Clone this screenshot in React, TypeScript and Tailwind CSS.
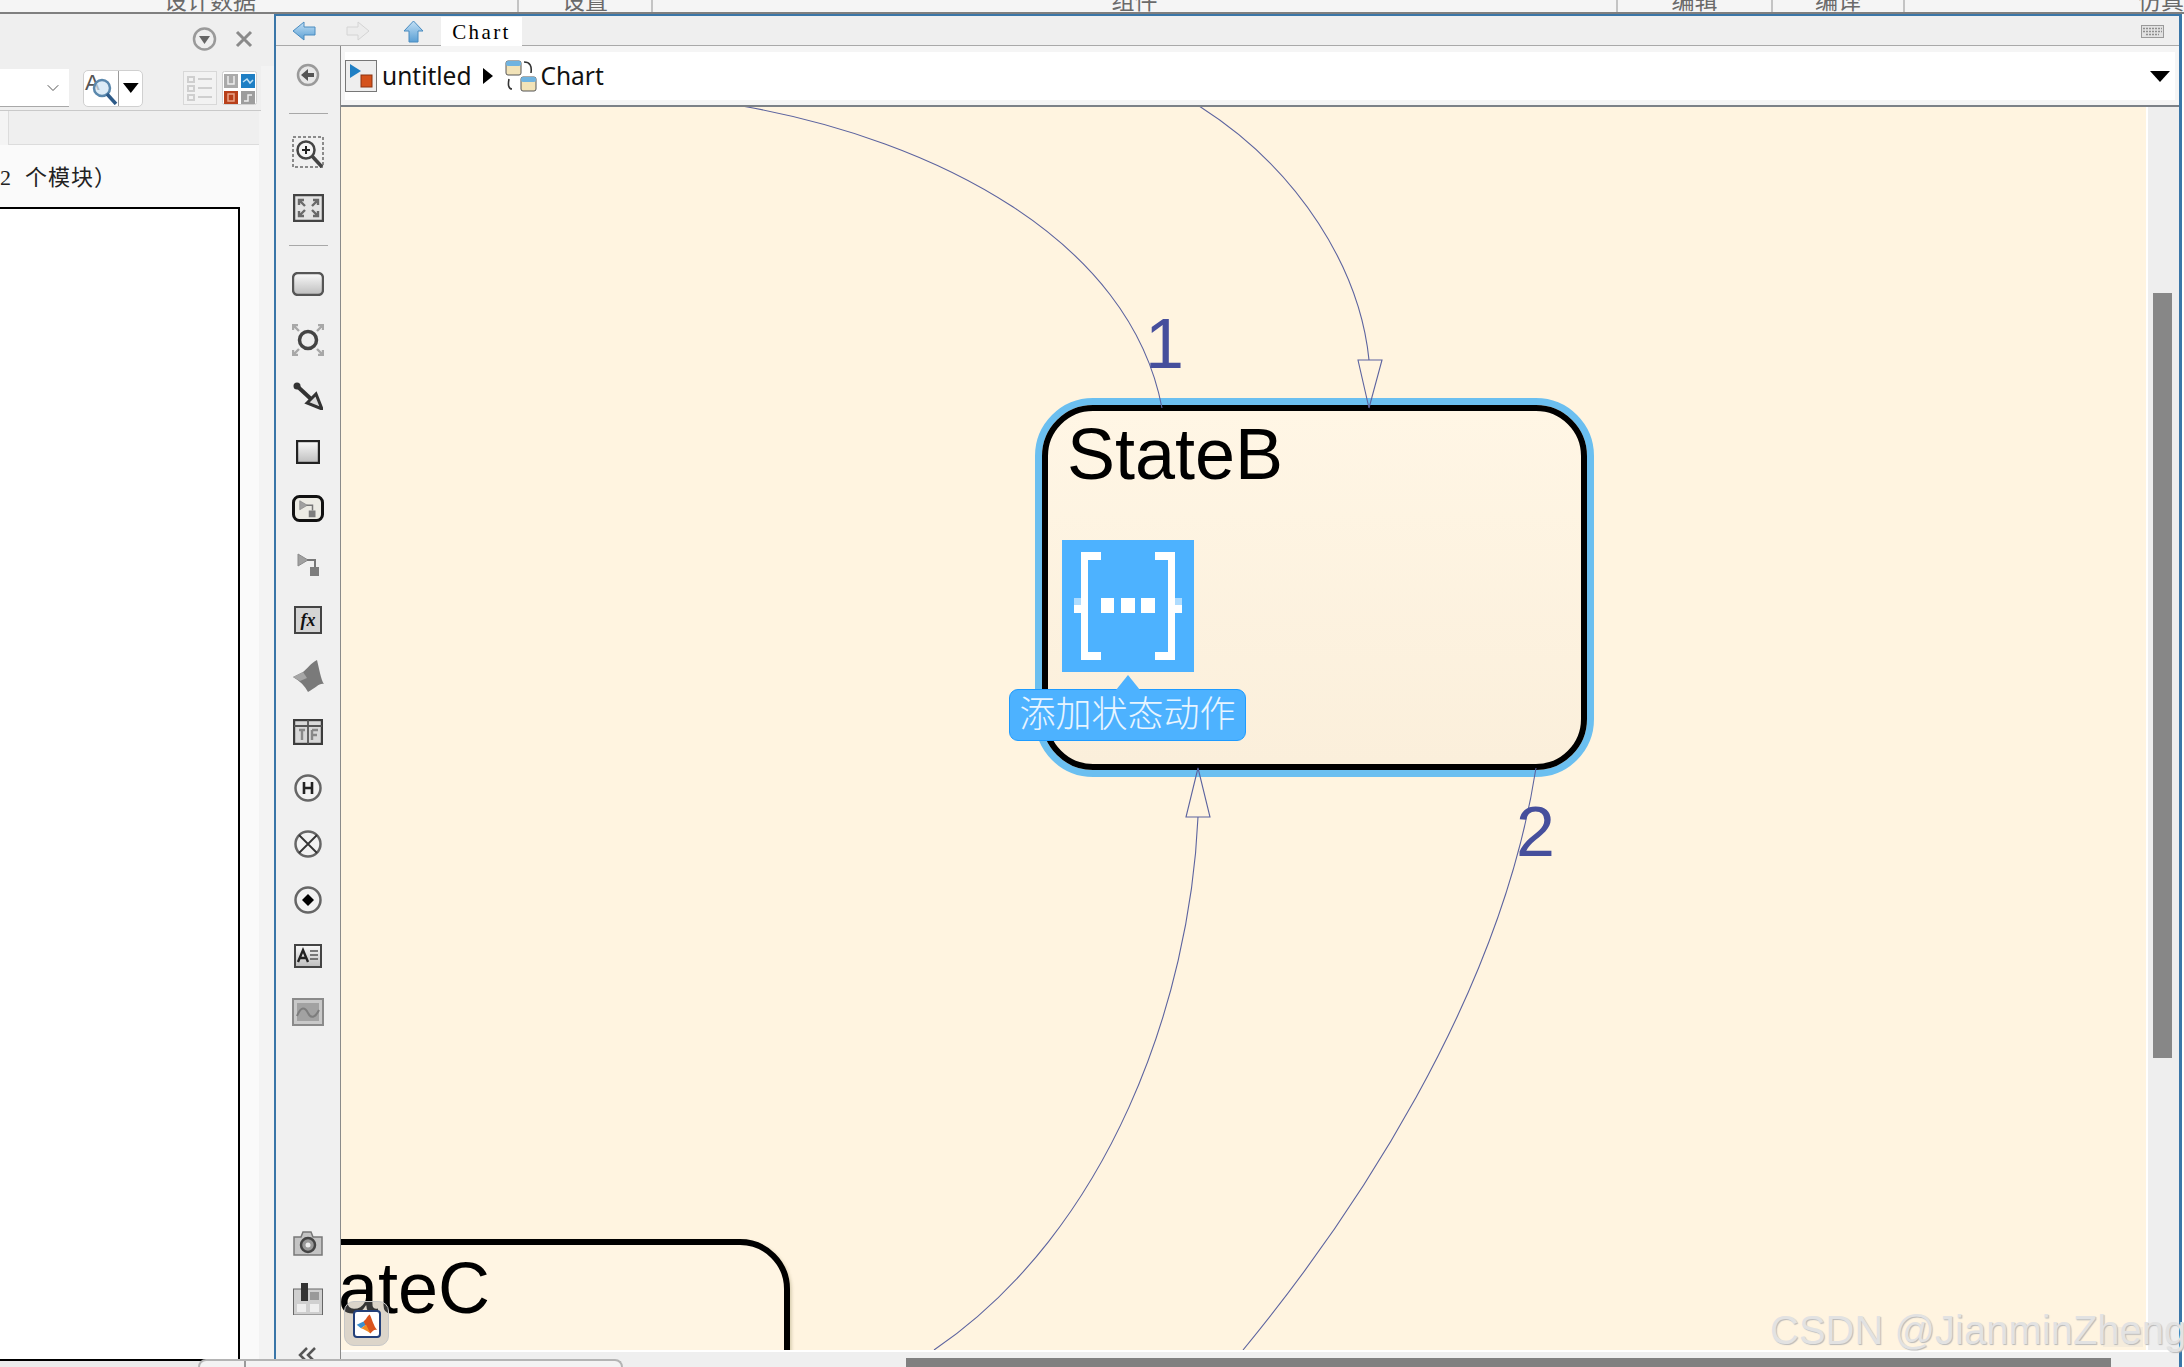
import type { ReactNode } from "react";
import { ChevronDown } from "lucide-react";

const tabs = [
  { label: "设计数据", cls: "w-[519px] justify-end pr-[261px]" },
  { label: "设置", cls: "w-[134px] justify-center" },
  { label: "组件", cls: "w-[965px] justify-center" },
  { label: "编辑", cls: "w-[155px] justify-center" },
  { label: "编译", cls: "w-[132px] justify-center" },
  { label: "仿真", cls: "flex-1 justify-end pr-[0px]" },
];

const Slot = ({ children }: { children: ReactNode }) => (
  <div className="h-14 w-full shrink-0 flex items-center justify-center">{children}</div>
);

const Ico = ({ w, h, children }: { w: number; h: number; children: ReactNode }) => (
  <svg width={w} height={h} viewBox={`0 0 ${w} ${h}`}>
    {children}
  </svg>
);

const Corners = ({ w, h, color = "#8d8d8d" }: { w: number; h: number; color?: string }) => (
  <g stroke={color} strokeWidth="2.4" fill="none">
    <path d={`M1 1 L7 7 M1 6 V1 H6`} />
    <path d={`M${w - 1} 1 L${w - 7} 7 M${w - 1} 6 V1 H${w - 6}`} />
    <path d={`M1 ${h - 1} L7 ${h - 7} M1 ${h - 6} V${h - 1} H6`} />
    <path d={`M${w - 1} ${h - 1} L${w - 7} ${h - 7} M${w - 1} ${h - 6} V${h - 1} H${w - 6}`} />
  </g>
);

const MiniBlock = ({ x, y, s = 1 }: { x: number; y: number; s?: number }) => (
  <g transform={`translate(${x} ${y}) scale(${s})`}>
    <path d="M1 1 L11 7 L1 13 Z" fill="#a0a0a0" stroke="#8a8a8a" />
    <path d="M10 7 H18 V14" stroke="#777" strokeWidth="2" fill="none" />
    <rect x="13" y="14" width="9" height="9" fill="#7d7d7d" />
  </g>
);

const MatlabMark = ({ size }: { size: number }) => (
  <svg width={size} height={size} viewBox="0 0 28 28">
    <path d="M2 15 L10 11 L13 15 L7 19 Z" fill="#3a8fd0" />
    <path d="M10 11 C13 9 15 4 17 3 C19 5 22 18 26 21 C22 20 20 23 18 25 C15 21 13 17 10 11 Z" fill="#d9541e" />
    <path d="M7 19 L13 15 L18 25 C14 22 10 20 7 19 Z" fill="#f08a24" />
  </svg>
);

const App = () => {
  return (
    <div className="w-[2184px] h-[1367px] relative overflow-hidden flex flex-col bg-[#f0f0f0] font-['Liberation_Sans','Noto_Sans_CJK_SC',sans-serif]">
      <svg className="absolute w-0 h-0">
        <defs>
          <linearGradient id="btn" x1="0" y1="0" x2="0" y2="1">
            <stop offset="0" stopColor="#fafafa" />
            <stop offset="1" stopColor="#bdbdbd" />
          </linearGradient>
          <linearGradient id="blueArrow" x1="0" y1="0" x2="0" y2="1">
            <stop offset="0" stopColor="#c3e0f5" />
            <stop offset="1" stopColor="#5a9fd4" />
          </linearGradient>
        </defs>
      </svg>

      {/* clipped ribbon tabs */}
      <div className="h-[14px] shrink-0 flex bg-[#f5f5f5] border-b-2 border-[#7f7f7f] overflow-hidden">
        {tabs.map((t, i) => (
          <div
            key={i}
            className={`${t.cls} h-full flex items-end border-r-2 border-[#c4c4c4] last:border-r-0 text-[23px] leading-none text-[#6a6a6a]`}
          >
            <span className="relative top-[1px] whitespace-nowrap">{t.label}</span>
          </div>
        ))}
      </div>

      <div className="flex-1 flex min-h-0">
        {/* left panel */}
        <div className="w-[274px] shrink-0 flex flex-col bg-[#f3f3f3]">
          <div className="h-[52px] shrink-0 bg-[#efefef] flex items-center justify-end gap-[17px] pr-[20px] pb-[3px]">
            <svg width="25" height="24" viewBox="0 0 25 24">
              <circle cx="12.5" cy="12" r="10.5" fill="none" stroke="#9a9a9a" strokeWidth="2.5" />
              <path d="M7 9 H18 L12.5 17 Z" fill="#666" />
            </svg>
            <svg width="20" height="20" viewBox="0 0 20 20">
              <path d="M3 3 L17 17 M17 3 L3 17" stroke="#8a8a8a" strokeWidth="3" />
            </svg>
          </div>
          <div className="h-[45px] shrink-0 w-[261px] bg-[#efefef] border-b border-[#c9c9c9] flex items-center">
            <div className="w-[69px] h-[38px] bg-white border-b border-[#a8a8a8] flex items-center justify-end pr-[6px]">
              <ChevronDown size={20} strokeWidth={1.2} className="text-[#555]" />
            </div>
            <div className="ml-[14px] w-[60px] h-[37px] bg-white border border-[#d0d0d0] rounded-[5px] flex items-center">
              <div className="w-[36px] h-full border-r border-[#9a9a9a] flex items-center justify-center">
                <svg width="34" height="34" viewBox="0 0 34 34">
                  <text x="1" y="19" fontSize="22" fill="#555" fontFamily="Liberation Sans">A</text>
                  <circle cx="18" cy="17" r="8" fill="#cfe4f3" fillOpacity="0.7" stroke="#5a88ad" strokeWidth="2.5" />
                  <path d="M23 23 L32 33" stroke="#2d5a88" strokeWidth="3.5" />
                </svg>
              </div>
              <svg width="22" height="12" viewBox="0 0 22 12" className="ml-[1px]">
                <path d="M3 1 H19 L11 11 Z" fill="#000" />
              </svg>
            </div>
            <svg width="34" height="34" viewBox="0 0 34 34" className="ml-[40px]">
              <rect x="0.5" y="0.5" width="33" height="33" fill="#f2f2f2" stroke="#d8d8d8" />
              <g fill="none" stroke="#cfcfcf" strokeWidth="2">
                <rect x="5" y="6" width="6" height="5" />
                <rect x="5" y="15" width="6" height="5" />
                <rect x="5" y="24" width="6" height="5" />
                <path d="M15 8 H29 M15 17 H29 M15 26 H29" />
              </g>
            </svg>
            <svg width="35" height="34" viewBox="0 0 35 34" className="ml-[5px]">
              <rect x="0.5" y="0.5" width="34" height="33" rx="2" fill="#fff" stroke="#d0d0d0" />
              <rect x="2" y="3" width="14" height="14" fill="#aaa" />
              <path d="M6 5 V13 H12 V5" stroke="#eee" strokeWidth="1.5" fill="none" />
              <rect x="19" y="3" width="14" height="14" fill="#1f7fc4" />
              <path d="M21 11 L25 8 L28 12 L31 9" stroke="#bfe0f5" strokeWidth="1.5" fill="none" />
              <rect x="2" y="20" width="14" height="13" fill="#b8401a" />
              <rect x="6" y="23" width="6" height="7" fill="none" stroke="#e9a489" strokeWidth="1.5" />
              <rect x="19" y="20" width="14" height="13" fill="#9d9d9d" />
              <path d="M22 30 H26 V24 H30" stroke="#eee" strokeWidth="1.5" fill="none" />
            </svg>
          </div>
          <div className="h-[34px] shrink-0 w-[259px] flex">
            <div className="w-[9px] border-r border-[#dcdcdc] bg-[#f4f4f4]" />
            <div className="flex-1 bg-[#efefef] border-b border-[#dcdcdc]" />
          </div>
          <div className="flex-1 w-[259px] bg-[#fafafa] flex flex-col">
            <div className="h-[62px] shrink-0 pt-[4px] flex items-center text-[22px] tracking-[1px] leading-none text-[#222] whitespace-pre font-['Liberation_Serif','Noto_Sans_CJK_SC',serif]">
              2  个模块）
            </div>
            <div className="w-[240px] flex-1 bg-white border-t-2 border-r-2 border-b-2 border-black mb-[6px]" />
          </div>
        </div>

        {/* chart window */}
        <div className="w-[1908px] shrink-0 flex flex-col border-l-2 border-t-2 border-r-[3px] border-[#3a76a8]">
          <div className="h-[30px] shrink-0 bg-[#efefef] border-b border-[#a9a9a9] flex items-center pt-[1px]">
            <svg width="24" height="20" viewBox="0 0 24 20" className="ml-[16px]">
              <path d="M1 10 L12 1 V6 H23 V14 H12 V19 Z" fill="url(#blueArrow)" stroke="#4a8cc0" />
            </svg>
            <svg width="24" height="20" viewBox="0 0 24 20" className="ml-[30px]">
              <path d="M23 10 L12 1 V6 H1 V14 H12 V19 Z" fill="#ececec" stroke="#d4d4d4" />
            </svg>
            <svg width="21" height="23" viewBox="0 0 21 23" className="ml-[33px]">
              <path d="M10.5 1 L20 11 H15 V22 H6 V11 H1 Z" fill="url(#blueArrow)" stroke="#4a8cc0" />
            </svg>
            <div className="ml-[17px] w-[81px] h-[29px] self-start bg-white text-center text-[21px] tracking-[2.4px] leading-[30px] text-black font-['Liberation_Serif',serif]">
              Chart
            </div>
            <svg width="23" height="13" viewBox="0 0 23 13" className="ml-auto mr-[15px]">
              <rect x="0.5" y="0.5" width="22" height="12" fill="#e2e2e2" stroke="#9a9a9a" />
              <path d="M2 3.5 H21 M2 6.5 H21 M5 9.5 H18" stroke="#8f8f8f" strokeWidth="1.5" strokeDasharray="2 1" />
            </svg>
          </div>

          <div className="flex-1 flex min-h-0">
            {/* tool strip */}
            <div className="w-[65px] shrink-0 border-r border-[#8a8a8a] bg-[#f0f0f0] pt-[1px] flex flex-col items-center overflow-hidden">
              <Slot>
                <svg width="24" height="24" viewBox="0 0 24 24">
                  <circle cx="12" cy="12" r="10" fill="#e8e8e8" stroke="#9a9a9a" strokeWidth="2.5" />
                  <path d="M5 12 L12 6 V10 H18 V14 H12 V18 Z" fill="#555" />
                </svg>
              </Slot>
              <div className="mt-[10px] h-[1px] w-[39px] shrink-0 bg-[#a8a8a8]" />
              <div className="mt-[10px] w-full shrink-0">
                <Slot>
                  <Ico w={32} h={32}>
                    <rect x="1" y="1" width="30" height="30" fill="none" stroke="#8a8a8a" strokeWidth="2" strokeDasharray="3 2" />
                    <circle cx="14" cy="14" r="8.5" fill="#f5f5f5" stroke="#444" strokeWidth="2.5" />
                    <path d="M10 14 H18 M14 10 V18" stroke="#222" strokeWidth="2" />
                    <path d="M20 20 L30 31" stroke="#444" strokeWidth="3.5" />
                  </Ico>
                </Slot>
              </div>
              <Slot>
                <Ico w={31} h={28}>
                  <rect x="1" y="1" width="29" height="26" fill="#e4e4e4" stroke="#444" strokeWidth="2.5" />
                  <g transform="translate(5 5)">
                    <Corners w={21} h={18} color="#6a6a6a" />
                  </g>
                </Ico>
              </Slot>
              <div className="mt-[9px] h-[1px] w-[39px] shrink-0 bg-[#a8a8a8]" />
              <div className="mt-[10px] w-full shrink-0">
                <Slot>
                  <Ico w={32} h={24}>
                    <rect x="1" y="1" width="30" height="22" rx="5" fill="url(#btn)" stroke="#555" strokeWidth="2.4" />
                  </Ico>
                </Slot>
              </div>
              <Slot>
                <Ico w={32} h={32}>
                  <Corners w={32} h={32} color="#a8a8a8" />
                  <circle cx="16" cy="16" r="8.5" fill="#eee" stroke="#444" strokeWidth="3.5" />
                </Ico>
              </Slot>
              <Slot>
                <Ico w={30} h={28}>
                  <circle cx="4" cy="4" r="3.5" fill="#333" />
                  <path d="M4 4 L18 17" stroke="#333" strokeWidth="4" />
                  <path d="M14 21 L23 12 L29 27 Z" fill="#ddd" stroke="#333" strokeWidth="3" />
                </Ico>
              </Slot>
              <Slot>
                <Ico w={24} h={24}>
                  <rect x="1" y="1" width="22" height="22" fill="url(#btn)" stroke="#222" strokeWidth="2.4" />
                </Ico>
              </Slot>
              <Slot>
                <Ico w={32} h={27}>
                  <rect x="1.5" y="1.5" width="29" height="24" rx="6" fill="#ecebe4" stroke="#111" strokeWidth="3" />
                  <MiniBlock x={7} y={5} s={0.75} />
                </Ico>
              </Slot>
              <Slot>
                <Ico w={23} h={25}>
                  <MiniBlock x={0} y={1} />
                </Ico>
              </Slot>
              <Slot>
                <div className="w-[28px] h-[28px] bg-[#d4d4d4] border-2 border-[#444] flex items-center justify-center text-[18px] leading-none italic font-bold text-[#111] font-['Liberation_Serif',serif]">
                  fx
                </div>
              </Slot>
              <Slot>
                <Ico w={32} h={32}>
                  <path d="M1 17 L11 12 C15 9 19 3 25 0 C27 8 29 20 32 24 C27 23 24 28 16 32 C13 26 8 21 1 17 Z" fill="#7a7a7a" />
                  <path d="M1 17 L11 12 L15 18 L8 21 Z" fill="#a5a5a5" />
                </Ico>
              </Slot>
              <Slot>
                <Ico w={30} h={26}>
                  <rect x="1" y="1" width="28" height="24" fill="#d8d8d8" stroke="#3c3c3c" strokeWidth="2.4" />
                  <path d="M1 7 H29 M15 1 V25" stroke="#555" strokeWidth="1.8" />
                  <path d="M6 11 H12 M9 11 V21 M19 11 V21 M19 11 H25 M19 16 H24" stroke="#888" strokeWidth="2.4" fill="none" />
                </Ico>
              </Slot>
              <Slot>
                <Ico w={28} h={28}>
                  <circle cx="14" cy="14" r="12.5" fill="#f2f2f2" stroke="#666" strokeWidth="2.5" />
                  <path d="M10 8 V20 M18 8 V20 M10 14 H18" stroke="#222" strokeWidth="2.6" />
                </Ico>
              </Slot>
              <Slot>
                <Ico w={28} h={28}>
                  <circle cx="14" cy="14" r="12.5" fill="#f2f2f2" stroke="#666" strokeWidth="2.5" />
                  <path d="M5 5 L23 23 M23 5 L5 23" stroke="#333" strokeWidth="1.8" />
                </Ico>
              </Slot>
              <Slot>
                <Ico w={28} h={28}>
                  <circle cx="14" cy="14" r="12.5" fill="#f2f2f2" stroke="#666" strokeWidth="2.5" />
                  <path d="M14 8 L20 14 L14 20 L8 14 Z" fill="#000" />
                </Ico>
              </Slot>
              <Slot>
                <Ico w={28} h={24}>
                  <rect x="1" y="1" width="26" height="22" fill="url(#btn)" stroke="#444" strokeWidth="2" />
                  <path d="M4 18 L9 6 L14 18 M6 14 H12" stroke="#222" strokeWidth="2.4" fill="none" />
                  <path d="M16 7 H24 M16 11 H24 M16 15 H24" stroke="#555" strokeWidth="1.6" />
                </Ico>
              </Slot>
              <Slot>
                <Ico w={32} h={28}>
                  <rect x="1" y="1" width="30" height="26" fill="#c9c9c9" stroke="#8a8a8a" strokeWidth="2" />
                  <rect x="5" y="5" width="22" height="18" fill="#a2a2a2" />
                  <path d="M5 18 C9 8 13 9 16 15 C19 21 23 20 27 12" stroke="#7d7d7d" strokeWidth="2" fill="none" />
                </Ico>
              </Slot>
              <div className="mt-[175px] w-full shrink-0">
                <Slot>
                  <Ico w={30} h={25}>
                    <path d="M1 6 H8 L10 1 H18 L20 6 H29 V24 H1 Z" fill="#c4c4c4" stroke="#777" strokeWidth="1.5" />
                    <circle cx="15" cy="14" r="7" fill="#999" stroke="#444" strokeWidth="2.5" />
                    <circle cx="15" cy="14" r="2.5" fill="#eee" />
                  </Ico>
                </Slot>
              </div>
              <Slot>
                <Ico w={30} h={32}>
                  <rect x="0.5" y="6" width="29" height="26" fill="#cfcfcf" stroke="#666" />
                  <rect x="8" y="0" width="7" height="18" fill="#333" />
                  <rect x="4" y="21" width="9" height="8" fill="#eee" />
                  <rect x="17" y="21" width="9" height="8" fill="#eee" />
                  <rect x="17" y="9" width="9" height="8" fill="#999" />
                </Ico>
              </Slot>
              <Slot>
                <Ico w={20} h={16}>
                  <path d="M9 1 L2 8 L9 15 M17 1 L10 8 L17 15" stroke="#555" strokeWidth="2.5" fill="none" />
                </Ico>
              </Slot>
            </div>

            <div className="flex-1 flex flex-col min-w-0 bg-[#f0f0f0]">
              {/* breadcrumb */}
              <div className="h-[61px] shrink-0 px-[4px] pt-[6px] pb-[5px] bg-[#f5f5f5] border-b-2 border-[#7c8187]">
                <div className="h-[48px] bg-white flex items-center text-[24.5px] leading-none text-[#111] font-['Noto_Sans',sans-serif]">
                  <svg width="32" height="32" viewBox="0 0 32 32">
                    <rect x="0.5" y="0.5" width="31" height="31" fill="#eee" stroke="#777" />
                    <path d="M5 4 L16 11 L5 18 Z" fill="#1f7fc4" />
                    <rect x="16" y="15" width="11" height="12" fill="#d4521c" stroke="#8c3310" />
                  </svg>
                  <span className="ml-[5px]">untitled</span>
                  <svg width="10" height="16" viewBox="0 0 10 16" className="ml-[11px]">
                    <path d="M0 0 L10 8 L0 16 Z" fill="#000" />
                  </svg>
                  <svg width="32" height="32" viewBox="0 0 32 32" className="ml-[12px]">
                    <rect x="1" y="1" width="15" height="14" rx="2" fill="#f2e3b8" stroke="#555" />
                    <rect x="1" y="1" width="15" height="5" rx="2" fill="#6fb3e0" />
                    <rect x="16" y="17" width="15" height="14" rx="2" fill="#f2e3b8" stroke="#555" />
                    <rect x="16" y="17" width="15" height="5" rx="2" fill="#6fb3e0" />
                    <path d="M19 2 C25 2 27 6 26 13 M7 29 C3 29 3 24 4 19" stroke="#333" strokeWidth="1.6" fill="none" />
                  </svg>
                  <span className="ml-[4px]">Chart</span>
                  <svg width="20" height="11" viewBox="0 0 20 11" className="ml-auto mr-[5px]">
                    <path d="M0 0 H20 L10 11 Z" fill="#000" />
                  </svg>
                </div>
              </div>

              <div className="flex-1 flex min-h-0">
                {/* chart canvas */}
                <div className="w-[1805px] shrink-0 relative overflow-hidden bg-[#fff4e0]">
                  {/* StateB */}
                  <div className="absolute left-[694px] top-[291px] w-[559px] h-[379px] rounded-[58px] border-[7px] border-[#6bbff0]">
                    <div className="w-full h-full rounded-[51px] border-[6px] border-black bg-gradient-to-b from-[#fff6e5] to-[#fbefdb] pt-[7px]">
                      <div className="pl-[19px] text-[72px] leading-[72px] text-black">StateB</div>
                      <div className="mt-[50px] ml-[14px] w-[132px] h-[132px] bg-[#4db2ff]">
                        <svg width="132" height="132" viewBox="0 0 132 132">
                          <g fill="#fff">
                            <rect x="19" y="12" width="7" height="108" />
                            <rect x="19" y="12" width="20" height="8" />
                            <rect x="19" y="112" width="20" height="8" />
                            <rect x="106" y="12" width="7" height="108" />
                            <rect x="93" y="12" width="20" height="8" />
                            <rect x="93" y="112" width="20" height="8" />
                            <rect x="39" y="58" width="13" height="15" />
                            <rect x="59" y="58" width="14" height="15" />
                            <rect x="79" y="58" width="14" height="15" />
                            <rect x="12" y="65" width="7" height="8" />
                            <rect x="113" y="65" width="7" height="8" />
                            <rect x="12" y="58" width="7" height="7" fillOpacity="0.55" />
                            <rect x="113" y="58" width="7" height="7" fillOpacity="0.55" />
                          </g>
                        </svg>
                      </div>
                    </div>
                  </div>

                  <svg className="absolute left-0 top-0" width="1805" height="1243" viewBox="0 0 1805 1243">
                    <g fill="none" stroke="#5c639f" strokeWidth="1.1">
                      <path d="M401 -1 C595 33 789 133 821 301" />
                      <path d="M858 -1 C959 63 1019 163 1028 253" />
                      <path d="M1017 253 L1041 253 L1028 301 Z" />
                      <path d="M857 710 C849 893 769 1123 593 1243" />
                      <path d="M857 661 L845 710 L869 710 Z" />
                      <path d="M1195 661 C1159 893 1009 1113 902 1243" />
                    </g>
                  </svg>

                  <div className="absolute left-[804px] top-[202px] text-[70px] leading-none text-[#464f9c]">1</div>
                  <div className="absolute left-[1175px] top-[690px] text-[70px] leading-none text-[#464f9c]">2</div>

                  {/* StateC, runs off the canvas on the left */}
                  <div className="absolute left-[-101px] top-[1132px] w-[550px] h-[300px] rounded-[50px] border-[6px] border-black bg-[#fff5e3] shadow-[2px_2px_3px_rgba(120,110,60,0.25)] pt-[7px] pl-[24px] text-[72px] leading-[72px] text-black">
                    StateC
                  </div>

                  {/* action tooltip */}
                  <div className="absolute left-[668px] top-[582px] w-[237px] h-[52px] rounded-[9px] bg-[#4db2ff] border border-[#1e9bff] flex items-center justify-center text-[36px] leading-none font-light text-[#e8f5ff]">
                    <svg width="24" height="15" viewBox="0 0 24 15" className="absolute left-[106px] top-[-15px]">
                      <path d="M0 15 L12 0 L24 15 Z" fill="#4db2ff" />
                    </svg>
                    添加状态动作
                  </div>

                  {/* matlab badge */}
                  <div className="absolute left-[3px] top-[1194px] w-[45px] h-[45px] rounded-[10px] bg-[#9a9a9a]/35 border border-[#c8c8c8] flex items-center justify-center">
                    <div className="w-[28px] h-[28px] rounded-[4px] bg-white border-2 border-[#23407a] flex items-center justify-center">
                      <MatlabMark size={24} />
                    </div>
                  </div>

                  <div className="absolute left-[1762px] top-[1220px] w-[40px] h-[20px] bg-[#f5ecdc]" />
                </div>

                {/* vertical scrollbar */}
                <div className="flex-1 bg-[#eeeeee] border-l-2 border-white">
                  <div className="mt-[186px] ml-[5px] w-[19px] h-[765px] bg-[#878787]" />
                </div>
              </div>

              {/* horizontal scrollbar */}
              <div className="h-[17px] shrink-0 bg-[#efefef] border-t-2 border-white pt-[6px]">
                <div className="ml-[565px] w-[1205px] h-[9px] bg-[#808080]" />
              </div>
            </div>
          </div>
        </div>
        <div className="flex-1 bg-white" />
      </div>

      {/* bottom edge of the window behind */}
      <div className="absolute left-0 bottom-0 w-[341px] h-[6px] bg-[#ececec]" />
      <div className="absolute left-[198px] bottom-0 w-[425px] h-[8px] bg-[#f3f3f3] border-t-2 border-x-2 border-[#b4b4b4] rounded-t-[10px]">
        <div className="ml-[44px] w-[2px] h-full bg-[#9a9a9a]" />
      </div>

      {/* watermark */}
      <div className="absolute left-[1770px] top-[1307px] text-[40px] leading-[46px] whitespace-nowrap text-[#e2e2e2] [text-shadow:1px_1px_1px_#b9b9b9]">
        CSDN @JianminZheng
      </div>
    </div>
  );
};

export default App;
